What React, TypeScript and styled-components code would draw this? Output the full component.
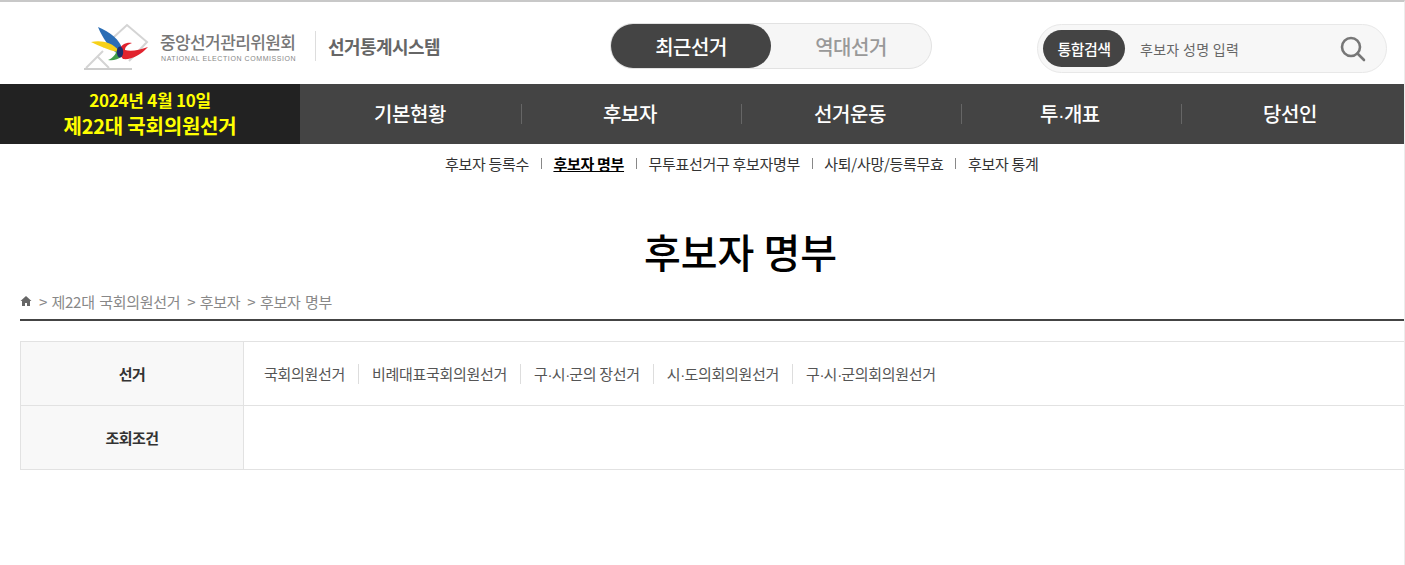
import * as React from "react";
import styled, { createGlobalStyle } from "styled-components";

const GlobalStyle = createGlobalStyle`
  html, body {
    margin: 0;
    padding: 0;
    background: #fff;
    overflow: hidden;
  }
  body {
    font-family: "Noto Sans CJK KR", "Noto Sans", sans-serif;
    color: #333;
  }
  * { box-sizing: border-box; }
`;

const Page = styled.div`
  width: 1405px;
  height: 565px;
  border-top: 2px solid #c8c8c8;
  border-right: 1px solid #ececec;
`;

const Header = styled.header`
  height: 82px;
  padding-top: 6px;
  display: grid;
  grid-template-columns: 560px 372px 1fr;
  align-items: center;
`;

const Brand = styled.div`
  display: flex;
  align-items: center;
  padding-left: 79px;
`;

const Org = styled.div`
  display: flex;
  flex-direction: column;
  margin: 3px 0 0 6px;
  width: 136px;
`;

const OrgName = styled.span`
  font-size: 17px;
  line-height: 20px;
  font-weight: 500;
  color: #777;
  letter-spacing: -0.6px;
  white-space: nowrap;
`;

const OrgEnglish = styled.span`
  font-family: "Liberation Sans", sans-serif;
  font-size: 7px;
  line-height: 9px;
  margin: 2px 0 0 1px;
  color: #888;
  letter-spacing: 0.58px;
  white-space: nowrap;
`;

const SystemName = styled.div`
  margin-left: 19px;
  padding-left: 12px;
  border-left: 1px solid #ddd;
  height: 30px;
  line-height: 30px;
  font-size: 18px;
  font-weight: 700;
  color: #666;
  letter-spacing: -0.55px;
  white-space: nowrap;
`;

const Toggle = styled.div`
  width: 322px;
  height: 46px;
  margin-left: 50px;
  display: flex;
  border: 1px solid #e2e2e2;
  border-radius: 23px;
  background: #f6f6f6;
`;

const ToggleOption = styled.div<{ $active?: boolean }>`
  width: 160px;
  height: 44px;
  border-radius: 22px;
  display: flex;
  align-items: center;
  justify-content: center;
  font-size: 20px;
  font-weight: 500;
  letter-spacing: -0.5px;
  background: ${(p) => (p.$active ? "#444" : "transparent")};
  color: ${(p) => (p.$active ? "#fff" : "#999")};
`;

const Search = styled.div`
  width: 350px;
  height: 49px;
  margin: 5px 0 0 105px;
  display: flex;
  align-items: center;
  padding: 0 19px 0 5px;
  border: 1px solid #e8e8e8;
  border-radius: 25px;
  background: #f7f7f7;
`;

const SearchBadge = styled.span`
  width: 82px;
  height: 37px;
  border-radius: 19px;
  background: #444;
  color: #fff;
  font-size: 15px;
  font-weight: 500;
  letter-spacing: -0.5px;
  display: flex;
  align-items: center;
  justify-content: center;
`;

const SearchHint = styled.span`
  flex: 1;
  margin-left: 15px;
  font-size: 14px;
  color: #666;
  letter-spacing: 0.3px;
`;

const Nav = styled.nav`
  height: 60px;
  display: flex;
  background: #444;
`;

const ElectionBox = styled.div`
  width: 300px;
  padding-bottom: 2px;
  background: #222;
  color: #ff0;
  display: flex;
  flex-direction: column;
  align-items: center;
  justify-content: center;
  font-weight: 700;
`;

const ElectionDate = styled.span`
  font-size: 17px;
  line-height: 25px;
  letter-spacing: -0.28px;
`;

const ElectionName = styled.span`
  font-size: 20px;
  line-height: 27px;
  letter-spacing: -0.22px;
`;

const NavItem = styled.div<{ $first?: boolean }>`
  width: 220px;
  display: flex;
  align-items: center;
  justify-content: center;
  position: relative;
  color: #fff;
  font-size: 20px;
  line-height: 58px;
  font-weight: 500;
  letter-spacing: -0.4px;
  &::before {
    content: "";
    display: ${(p) => (p.$first ? "none" : "block")};
    position: absolute;
    left: 1px;
    top: 20px;
    width: 1px;
    height: 20px;
    background: #666;
  }
`;

const SubNav = styled.ul`
  list-style: none;
  margin: 0;
  padding: 0 0 0 445px;
  height: 39px;
  display: flex;
  align-items: center;
`;

const SubNavItem = styled.li<{ $active?: boolean; $first?: boolean }>`
  display: flex;
  align-items: center;
  font-size: 15px;
  letter-spacing: -0.3px;
  color: ${(p) => (p.$active ? "#000" : "#333")};
  font-weight: ${(p) => (p.$active ? 700 : 400)};
  text-decoration: ${(p) => (p.$active ? "underline" : "none")};
  white-space: nowrap;
  ${(p) =>
    !p.$first &&
    `
    margin-left: 11.7px;
    &::before {
      content: "";
      width: 1px;
      height: 11px;
      background: #888;
      margin-right: 11.7px;
    }
  `}
`;

const Title = styled.h1`
  margin: 0;
  padding-left: 77px;
  height: 100px;
  padding-top: 42px;
  text-align: center;
  font-size: 40px;
  line-height: 52px;
  font-weight: 500;
  color: #000;
`;

const Content = styled.main`
  padding-left: 20px;
`;

const Crumbs = styled.div`
  height: 38px;
  display: flex;
  align-items: center;
  gap: 7px;
  border-bottom: 2px solid #444;
  font-size: 15px;
  letter-spacing: -0.3px;
  word-spacing: 1.5px;
  color: #888;
`;

const HomeIcon = styled.svg`
  width: 12px;
  height: 12px;
  fill: #666;
`;

const FilterTable = styled.div`
  margin-top: 20px;
  display: grid;
  grid-template-columns: 223px 1fr;
  grid-auto-rows: 64px;
  border-top: 1px solid #e2e2e2;
  border-left: 1px solid #e2e2e2;
`;

const HeadCell = styled.div`
  display: flex;
  align-items: center;
  justify-content: center;
  background: #f8f8f8;
  border-right: 1px solid #e2e2e2;
  border-bottom: 1px solid #e2e2e2;
  font-size: 15px;
  font-weight: 700;
  letter-spacing: -0.5px;
  color: #333;
`;

const ValueCell = styled.div`
  display: flex;
  align-items: center;
  padding-left: 20px;
  border-bottom: 1px solid #e2e2e2;
`;

const Choice = styled.span<{ $first?: boolean }>`
  display: flex;
  align-items: center;
  font-size: 15px;
  letter-spacing: -0.3px;
  color: #555;
  white-space: pre;
  ${(p) =>
    !p.$first &&
    `
    margin-left: 13px;
    &::before {
      content: "";
      width: 1px;
      height: 20px;
      background: #ddd;
      margin-right: 13px;
    }
  `}
`;

const Dot = styled.span`
  font-family: "Liberation Sans", sans-serif;
  letter-spacing: -0.9px;
`;

const withDots = (text: string) =>
  text.split("·").flatMap((part, i) => (i === 0 ? [part] : [<Dot key={i}>·</Dot>, part]));

const Logo = () => (
  <svg width="75" height="54" viewBox="0 0 75 54">
    <g fill="none" stroke="#d4d4d4" strokeWidth="2">
      <path d="M24 28 L48 6 L68 23 L50 42" />
      <path d="M24 32 L7 49 M18 37 L30 49" />
    </g>
    <path d="M5 50 H53" stroke="#cdcdcd" strokeWidth="2" />
    <path d="M19 8 C31 13 41 20 44 32 L40 36 C31 30 24 20 19 8 Z" fill="#2a6db5" />
    <path d="M12 23 C22 21 33 23 40 32 L38 33 C30 31 20 27 12 23 Z" fill="#f7d117" />
    <path d="M29 41 C34 39 37 35 38 31 L43 37 C39 41 33 42 29 41 Z" fill="#3f9e48" />
    <path d="M41 30 C42 26 47 23 53 24 C48 26 46 28 46 31 C52 33 60 31 69 28 C62 36 52 41 44 40 C41 37 40 33 41 30 Z" fill="#e1232e" />
    <ellipse cx="41" cy="33" rx="3.2" ry="5.5" fill="#1c2f6b" />
  </svg>
);

const SearchIcon = () => (
  <svg width="28" height="28" viewBox="0 0 28 28" fill="none" stroke="#777" strokeWidth="2.6">
    <circle cx="12" cy="12" r="9" />
    <path d="M18.5 18.5 L25 25" strokeLinecap="round" />
  </svg>
);

const MENU = ["기본현황", "후보자", "선거운동", "투·개표", "당선인"];
const SUB_MENU = ["후보자 등록수", "후보자 명부", "무투표선거구 후보자명부", "사퇴/사망/등록무효", "후보자 통계"];
const ELECTIONS = ["국회의원선거", "비례대표국회의원선거", "구·시·군의 장선거", "시·도의회의원선거", "구·시·군의회의원선거"];

export default function App() {
  return (
    <Page>
      <GlobalStyle />
      <Header>
        <Brand>
          <Logo />
          <Org>
            <OrgName>중앙선거관리위원회</OrgName>
            <OrgEnglish>NATIONAL ELECTION COMMISSION</OrgEnglish>
          </Org>
          <SystemName>선거통계시스템</SystemName>
        </Brand>
        <Toggle>
          <ToggleOption $active>최근선거</ToggleOption>
          <ToggleOption>역대선거</ToggleOption>
        </Toggle>
        <Search>
          <SearchBadge>통합검색</SearchBadge>
          <SearchHint>후보자 성명 입력</SearchHint>
          <SearchIcon />
        </Search>
      </Header>
      <Nav>
        <ElectionBox>
          <ElectionDate>2024년 4월 10일</ElectionDate>
          <ElectionName>제22대 국회의원선거</ElectionName>
        </ElectionBox>
        {MENU.map((m, i) => (
          <NavItem key={m} $first={i === 0}>
            <span>{withDots(m)}</span>
          </NavItem>
        ))}
      </Nav>
      <SubNav>
        {SUB_MENU.map((s, i) => (
          <SubNavItem key={s} $first={i === 0} $active={i === 1}>{s}</SubNavItem>
        ))}
      </SubNav>
      <Title>후보자 명부</Title>
      <Content>
        <Crumbs>
          <HomeIcon viewBox="0 0 12 12">
            <path d="M6 1 L0.5 6 H2 V11 H5 V8 H7 V11 H10 V6 H11.5 Z" />
          </HomeIcon>
          <span>&gt; 제22대 국회의원선거</span>
          <span>&gt; 후보자</span>
          <span>&gt; 후보자 명부</span>
        </Crumbs>
        <FilterTable>
          <HeadCell>선거</HeadCell>
          <ValueCell>
            {ELECTIONS.map((e, i) => (
              <Choice key={e} $first={i === 0}>
                <span>{withDots(e)}</span>
              </Choice>
            ))}
          </ValueCell>
          <HeadCell>조회조건</HeadCell>
          <ValueCell />
        </FilterTable>
      </Content>
    </Page>
  );
}
